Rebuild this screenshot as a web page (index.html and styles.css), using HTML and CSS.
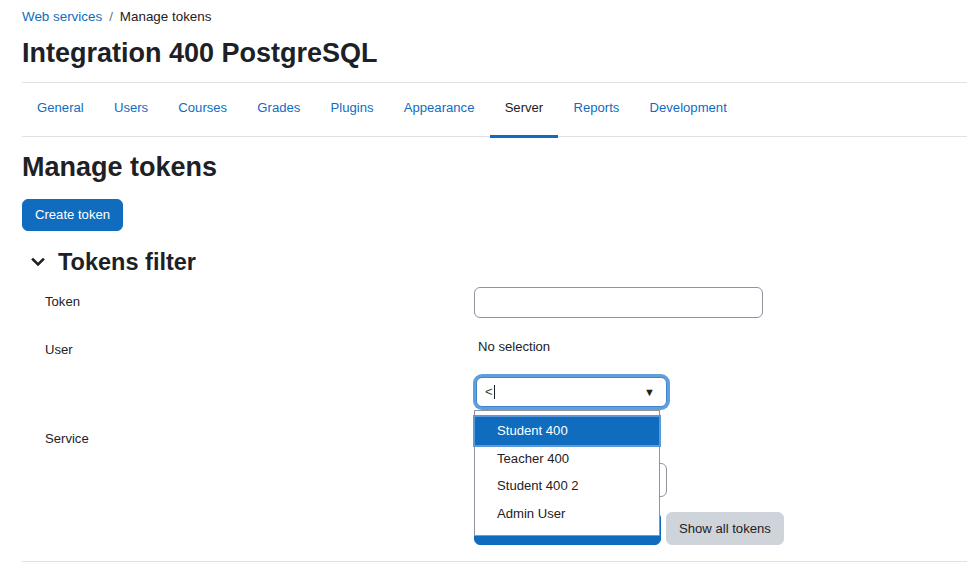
FILE: index.html
```html
<!DOCTYPE html>
<html lang="en">
<head>
<meta charset="utf-8">
<title>Manage tokens</title>
<link rel="stylesheet" href="styles.css">
</head>
<body>
<div class="page">
  <nav class="breadcrumb">
    <a href="#" class="crumb-link">Web services</a>
    <span class="crumb-sep">/</span>
    <span class="crumb-current">Manage tokens</span>
  </nav>
  <h1 class="page-title">Integration 400 PostgreSQL</h1>

  <nav class="tabs">
    <a href="#" class="tab">General</a>
    <a href="#" class="tab">Users</a>
    <a href="#" class="tab">Courses</a>
    <a href="#" class="tab">Grades</a>
    <a href="#" class="tab">Plugins</a>
    <a href="#" class="tab">Appearance</a>
    <a href="#" class="tab active">Server</a>
    <a href="#" class="tab">Reports</a>
    <a href="#" class="tab">Development</a>
  </nav>

  <h2 class="section-title">Manage tokens</h2>
  <button class="btn btn-primary create-btn">Create token</button>

  <div class="filter-head">
    <svg class="chevron" width="14" height="10" viewBox="0 0 14 10"><polyline points="2,2.5 7,7.5 12,2.5" fill="none" stroke="#1d2125" stroke-width="2.6" stroke-linecap="square"/></svg>
    <h3 class="filter-title">Tokens filter</h3>
  </div>

  <form class="filter-form">
    <div class="form-row row-token">
      <label class="form-label">Token</label>
      <div class="form-control-col">
        <input type="text" class="text-input">
      </div>
    </div>

    <div class="form-row row-user">
      <label class="form-label">User</label>
      <div class="form-control-col">
        <div class="no-selection">No selection</div>
        <div class="combo-wrap">
          <div class="combo">
            <span class="combo-text">&lt;</span><span class="caret"></span>
            <span class="combo-arrow">▼</span>
          </div>
          <ul class="listbox">
            <li class="option selected">Student 400</li>
            <li class="option">Teacher 400</li>
            <li class="option">Student 400 2</li>
            <li class="option">Admin User</li>
          </ul>
        </div>
      </div>
    </div>

    <div class="form-row row-service">
      <label class="form-label">Service</label>
      <div class="form-control-col">
        <div class="no-selection-space"></div>
        <div class="select-box"></div>
      </div>
    </div>

    <div class="form-row row-buttons">
      <div></div>
      <div class="form-control-col buttons">
        <button type="button" class="btn btn-primary apply-btn" aria-label="Apply filter"></button>
        <button type="button" class="btn btn-secondary">Show all tokens</button>
      </div>
    </div>
  </form>
  <div class="bottom-line"></div>
</div>
</body>
</html>
```

FILE: styles.css
```css
* { box-sizing: border-box; }
html, body { margin: 0; padding: 0; background: #fff; }
body {
  font-family: "Liberation Sans", Arial, sans-serif;
  font-size: 13.125px;
  color: #1d2125;
  overflow: hidden;
}
.page { padding: 0 0 0 22px; width: 967px; }

.breadcrumb {
  margin-top: 9px;
  line-height: 16px;
  font-size: 13.4px;
  display: flex;
}
.crumb-link { color: #0f6cbf; text-decoration: none; }
.crumb-sep { color: #6a737b; padding: 0 7px; }
.crumb-current { color: #1d2125; }

.page-title {
  margin: 12px 0 0;
  font-size: 27px;
  line-height: 32px;
  font-weight: 700;
}

.tabs {
  margin-top: 13px;
  display: flex;
  border-top: 1px solid #dee2e6;
  border-bottom: 1px solid #dee2e6;
  height: 55px;
}
.tab {
  display: block;
  padding: 17px 15.1px 0;
  height: 53px;
  line-height: 16px;
  color: #0f6cbf;
  text-decoration: none;
  font-size: 13.125px;
}
.tab.active {
  color: #1d2125;
  height: 55px;
  border-bottom: 3px solid #0f6cbf;
  margin-bottom: -1px;
}

.section-title {
  margin: 14px 0 0;
  font-size: 27px;
  line-height: 32px;
  font-weight: 700;
}

.btn {
  font-family: "Liberation Sans", Arial, sans-serif;
  font-size: 13.125px;
  border-radius: 6px;
  border: 1px solid transparent;
  height: 33px;
  line-height: 16px;
  padding: 0 12px;
  cursor: pointer;
}
.btn-primary { background: #0f6cbf; color: #fff; border-color: #0f6cbf; }
.btn-secondary { background: #ced4da; color: #1d2125; border-color: #ced4da; }
.create-btn { margin-top: 16px; height: 32px; width: 101px; display: block; padding: 0; }

.filter-head {
  margin-top: 17px;
  display: flex;
  align-items: center;
  height: 28px;
}
.chevron { margin-left: 9px; margin-right: 13px; }
.filter-title {
  margin: 0;
  font-size: 23.5px;
  line-height: 28px;
  font-weight: 700;
}

.filter-form { padding-left: 23px; }
.form-row {
  display: grid;
  grid-template-columns: 429px 1fr;
}
.form-label { line-height: 16px; }

.row-token { margin-top: 11px; align-items: center; }
.row-token .form-label { margin-top: -2px; }
.text-input {
  width: 289px;
  height: 31px;
  border: 1px solid #8f959e;
  border-radius: 6px;
  display: block;
}

.row-user { margin-top: 15px; }
.row-user .form-label { padding-top: 9px; }
.row-service .form-label { padding-top: 9px; }
.no-selection { padding: 6px 0 0 4px; height: 21px; line-height: 16px; }
.no-selection-space { height: 21px; }

.combo-wrap { position: relative; margin-top: 23px; margin-left: 2px; width: 191px; }
.combo {
  height: 30px;
  border: 1px solid #3d85cf;
  box-shadow: 0 0 0 3px #629fda;
  border-radius: 6px;
  display: flex;
  align-items: center;
  padding: 0 11px 0 8px;
  background: #fff;
}
.combo-text { line-height: 16px; color: #3a3f44; }
.caret { width: 1px; height: 14px; background: #1d2125; margin-left: 1px; }
.combo-arrow { margin-left: auto; font-size: 11px; color: #1d2125; }

.listbox {
  position: absolute;
  top: 33px;
  left: -2px;
  width: 186px;
  margin: 0;
  padding: 6px 0 8px;
  list-style: none;
  background: #fff;
  border: 1px solid #8f959e;
  z-index: 5;
}
.option {
  height: 27.5px;
  line-height: 27px;
  padding-left: 22px;
  color: #1d2125;
}
.option.selected {
  background: #0f6cbf;
  color: #fff;
  box-shadow: 0 0 0 2px #5b9ad6;
  position: relative;
}

.row-service { margin-top: 15px; }
.select-box {
  margin-top: 20px;
  width: 193px;
  height: 34px;
  border: 1px solid #8f959e;
  border-radius: 6px;
}

.row-buttons { margin-top: 15px; }
.buttons { display: flex; gap: 5px; }
.apply-btn { width: 187px; }

.bottom-line {
  margin-top: 16px;
  border-top: 1px solid #dee2e6;
  height: 8px;
}
```
